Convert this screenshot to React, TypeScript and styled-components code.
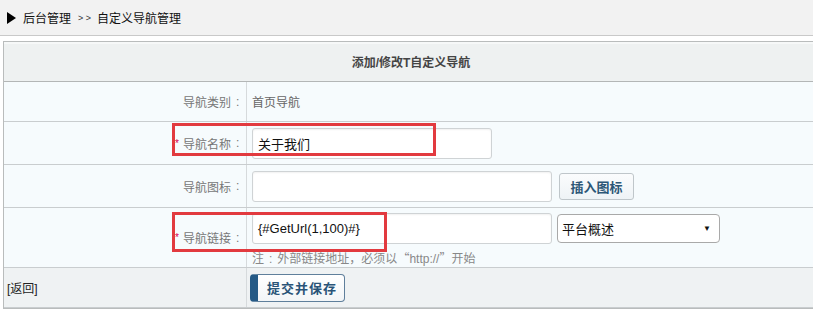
import React from "react";
import styled, { createGlobalStyle } from "styled-components";

const GlobalStyle = createGlobalStyle`
  html, body {
    margin: 0;
    padding: 0;
    background: #ffffff;
    overflow: hidden;
  }
  body {
    font-family: "Liberation Sans", "Noto Sans CJK SC", sans-serif;
    font-size: 12px;
    color: #333;
  }
`;

type RowProps = { $h: number; $bg?: string };

const App: React.FC = () => {
  return (
    <Page>
      <GlobalStyle />
      <Crumbs>
        <Arrow />
        <span>后台管理</span>
        <Sep>&gt; &gt;</Sep>
        <span>自定义导航管理</span>
      </Crumbs>

      <FormTable>
        <HeadRow>添加/修改T自定义导航</HeadRow>

        <Row $h={40}>
          <Label>
            导航类别<Colon>:</Colon>
          </Label>
          <Field>
            <Plain>首页导航</Plain>
          </Field>
        </Row>

        <Row $h={43}>
          <Label>
            <Star>*</Star>导航名称<Colon>:</Colon>
          </Label>
          <Field>
            <TextBox $w={240}>关于我们</TextBox>
          </Field>
        </Row>

        <Row $h={43}>
          <Label>
            导航图标<Colon>:</Colon>
          </Label>
          <Field>
            <TextBox $w={300} />
            <SmallButton>插入图标</SmallButton>
          </Field>
        </Row>

        <Row $h={60}>
          <Label>
            <Star>*</Star>导航链接<Colon>:</Colon>
          </Label>
          <FieldStack>
            <Line>
              <TextBox $w={300}>{"{#GetUrl(1,100)#}"}</TextBox>
              <SelectBox>
                <span>平台概述</span>
                <Caret>▼</Caret>
              </SelectBox>
            </Line>
            <Note>
              注<NoteColon>:</NoteColon>外部链接地址，必须以<Cjk>“</Cjk>http://
              <Cjk>”</Cjk>开始
            </Note>
          </FieldStack>
        </Row>

        <Row $h={40} $bg="#eff2f3">
          <BackCell>[返回]</BackCell>
          <SubmitCell>
            <Submit>提交并保存</Submit>
          </SubmitCell>
        </Row>

        <Mark style={{ left: 168, top: 81, width: 258, height: 27 }} />
        <Mark style={{ left: 168, top: 170, width: 209, height: 34 }} />
      </FormTable>
    </Page>
  );
};

export default App;

const Page = styled.div`
  width: 813px;
  height: 335px;
  background: #fff;
`;

const Crumbs = styled.div`
  height: 36px;
  box-sizing: border-box;
  background: #f2f2f2;
  border-bottom: 1px solid #c9c9c9;
  display: flex;
  align-items: center;
  padding-left: 7px;
  font-size: 12px;
  color: #111;
`;

const Arrow = styled.span`
  width: 0;
  height: 0;
  border-left: 9px solid #000;
  border-top: 6px solid transparent;
  border-bottom: 6px solid transparent;
  margin-right: 7px;
`;

const Sep = styled.span`
  margin: 0 6px 0 7px;
  font-size: 9px;
  color: #333;
`;

const FormTable = styled.div`
  position: relative;
  margin: 5px 0 0 3px;
  width: 840px;
  border: 1px solid #b9bcbc;
  border-right: none;
`;

const HeadRow = styled.div`
  height: 39px;
  background: #eef1f1;
  border-bottom: 1px solid #b3b6b6;
  display: flex;
  align-items: center;
  justify-content: center;
  font-weight: bold;
  font-size: 12px;
  color: #444;
  padding-right: 26px;
  box-shadow: inset 0 2px 0 #f6f8f8;
`;

const Row = styled.div<RowProps>`
  height: ${(p) => p.$h - 1}px;
  display: grid;
  grid-template-columns: 243px 1fr;
  background: ${(p) => p.$bg || "#f6fbfd"};
  border-bottom: 1px solid #c9cdcf;
  &:last-of-type {
    border-bottom: none;
  }
`;

const Label = styled.div`
  display: flex;
  align-items: center;
  justify-content: flex-end;
  padding-right: 4px;
  border-right: 1px solid #d6dadc;
  color: #777;
  font-size: 12px;
`;

const Colon = styled.span`
  margin-left: 5px;
  width: 6px;
`;

const Star = styled.span`
  color: #d6004c;
  margin-right: 4px;
  font-size: 10px;
`;

const Field = styled.div`
  display: flex;
  align-items: center;
  padding-left: 5px;
  gap: 7px;
`;

const FieldStack = styled.div`
  display: flex;
  flex-direction: column;
  padding: 5px 0 0 5px;
  gap: 5px;
`;

const Line = styled.div`
  display: flex;
  align-items: center;
  gap: 5px;
`;

const Plain = styled.span`
  color: #666;
  font-size: 12px;
`;

const TextBox = styled.div<{ $w: number }>`
  width: ${(p) => p.$w}px;
  height: 31px;
  box-sizing: border-box;
  border: 1px solid #cfd3d5;
  border-radius: 3px;
  background: #fff;
  box-shadow: inset 0 1px 2px rgba(0, 0, 0, 0.06);
  display: flex;
  align-items: center;
  padding-left: 5px;
  font-size: 13px;
  color: #111;
`;

const SmallButton = styled.div`
  width: 75px;
  height: 27px;
  box-sizing: border-box;
  border: 1px solid #bfc6ca;
  border-radius: 3px;
  background: linear-gradient(#fbfcfd, #eef3f6);
  display: flex;
  align-items: center;
  justify-content: center;
  font-weight: bold;
  font-size: 13px;
  color: #2c5777;
`;

const SelectBox = styled.div`
  width: 163px;
  height: 29px;
  box-sizing: border-box;
  border: 1px solid #a9a9a9;
  border-radius: 4px;
  background: #fff;
  display: flex;
  align-items: center;
  justify-content: space-between;
  padding: 0 8px 0 4px;
  font-size: 13px;
  color: #111;
`;

const Caret = styled.span`
  font-size: 8px;
  color: #111;
`;

const Note = styled.div`
  color: #888;
  font-size: 12px;
`;

const NoteColon = styled.span`
  margin: 0 5px;
`;

const Cjk = styled.span`
  font-family: "Noto Sans CJK SC", sans-serif;
`;

const BackCell = styled.div`
  display: flex;
  align-items: center;
  padding-left: 3px;
  border-right: 1px solid #d6dadc;
  font-size: 12px;
  color: #222;
`;

const SubmitCell = styled.div`
  display: flex;
  align-items: center;
  padding-left: 3px;
`;

const Submit = styled.div`
  width: 95px;
  height: 28px;
  box-sizing: border-box;
  border: 1px solid #5f7f9b;
  border-left: 8px solid #255a86;
  border-radius: 4px;
  background: linear-gradient(#ffffff, #f2f5f7);
  display: flex;
  align-items: center;
  justify-content: center;
  padding-left: 2px;
  font-weight: bold;
  font-size: 13px;
  letter-spacing: 1px;
  color: #2a5478;
`;

const Mark = styled.div`
  position: absolute;
  border: 3px solid #e23a3f;
  pointer-events: none;
`;
